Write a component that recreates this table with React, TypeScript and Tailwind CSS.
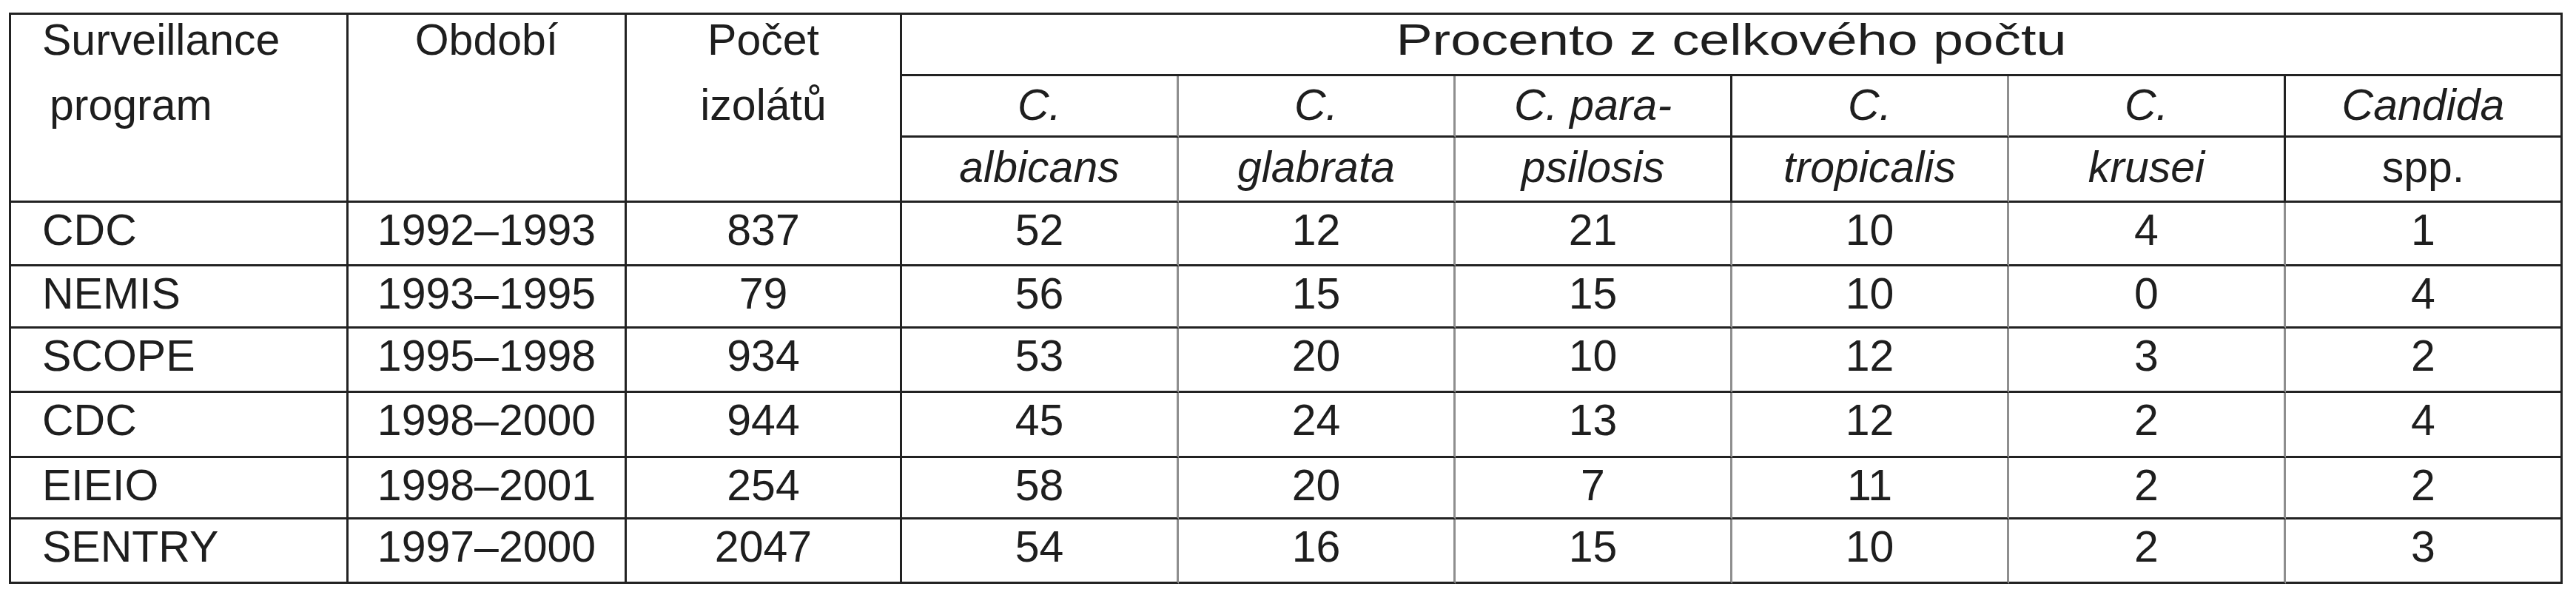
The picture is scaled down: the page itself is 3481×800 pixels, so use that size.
import React from "react";

const D_R = "border-r-[3px] border-r-[#222]";
const G_R = "border-r-[3px] border-r-[#8e8e8e]";
const D_B = "border-b-[3px] border-b-[#222]";

type CellProps = { className?: string; children?: React.ReactNode };
function Cell({ className = "", children }: CellProps) {
  return <div className={"whitespace-nowrap " + className}>{children}</div>;
}

const rows: string[][] = [
  ["CDC", "1992–1993", "837", "52", "12", "21", "10", "4", "1"],
  ["NEMIS", "1993–1995", "79", "56", "15", "15", "10", "0", "4"],
  ["SCOPE", "1995–1998", "934", "53", "20", "10", "12", "3", "2"],
  ["CDC", "1998–2000", "944", "45", "24", "13", "12", "2", "4"],
  ["EIEIO", "1998–2001", "254", "58", "20", "7", "11", "2", "2"],
  ["SENTRY", "1997–2000", "2047", "54", "16", "15", "10", "2", "3"],
];

const dataRight = [D_R, D_R, D_R, G_R, G_R, G_R, G_R, G_R, D_R];
const headRight = [D_R, D_R, D_R, G_R, G_R, D_R, G_R, D_R, D_R];

const species1 = ["C.", "C.", "C. para-", "C.", "C.", "Candida"];
const species2 = ["albicans", "glabrata", "psilosis", "tropicalis", "krusei", "spp."];

export default function App() {
  return (
    <div className="w-[3481px] h-[800px] bg-white overflow-hidden pt-[17px] pl-[12px] font-['Liberation_Sans',Arial,sans-serif] text-[59px] leading-none text-[#1e1e1e]">
      <div className="grid w-max grid-cols-[456px_376px_372px_374px_374px_374px_374px_374px_374px] grid-rows-[83px_83px_88px_86px_84px_87px_88px_83px_87px] border-t-[3px] border-l-[3px] border-t-[#222] border-l-[#222]">
        {/* header row 1 */}
        <Cell className={`${D_R} pt-[5px] pl-[42px]`}>Surveillance</Cell>
        <Cell className={`${D_R} pt-[5px] text-center`}>Období</Cell>
        <Cell className={`${D_R} pt-[5px] text-center`}>Počet</Cell>
        <Cell className={`col-span-6 ${D_R} ${D_B} pt-[5px] text-center`}>
          <span className="inline-block scale-x-125">Procento z celkového počtu</span>
        </Cell>

        {/* header row 2 */}
        <Cell className={`${D_R} pt-[10px] pl-[52px]`}>program</Cell>
        <Cell className={`${D_R} pt-[10px] text-center`}></Cell>
        <Cell className={`${D_R} pt-[10px] text-center`}>izolátů</Cell>
        {species1.map((s, i) => (
          <Cell key={"s1" + i} className={`${headRight[i + 3]} ${D_B} pt-[10px] text-center italic`}>
            {s}
          </Cell>
        ))}

        {/* header row 3 */}
        <Cell className={`${D_R} ${D_B}`}></Cell>
        <Cell className={`${D_R} ${D_B}`}></Cell>
        <Cell className={`${D_R} ${D_B}`}></Cell>
        {species2.map((s, i) => (
          <Cell
            key={"s2" + i}
            className={`${headRight[i + 3]} ${D_B} pt-[11px] text-center ${s === "spp." ? "" : "italic"}`}
          >
            {s}
          </Cell>
        ))}

        {/* data rows */}
        {rows.map((r, ri) =>
          r.map((v, ci) => (
            <Cell
              key={ri + "-" + ci}
              className={`${dataRight[ci]} ${D_B} pt-[8px] ${ci === 0 ? "pl-[42px]" : "text-center"}`}
            >
              {v}
            </Cell>
          ))
        )}
      </div>
    </div>
  );
}
